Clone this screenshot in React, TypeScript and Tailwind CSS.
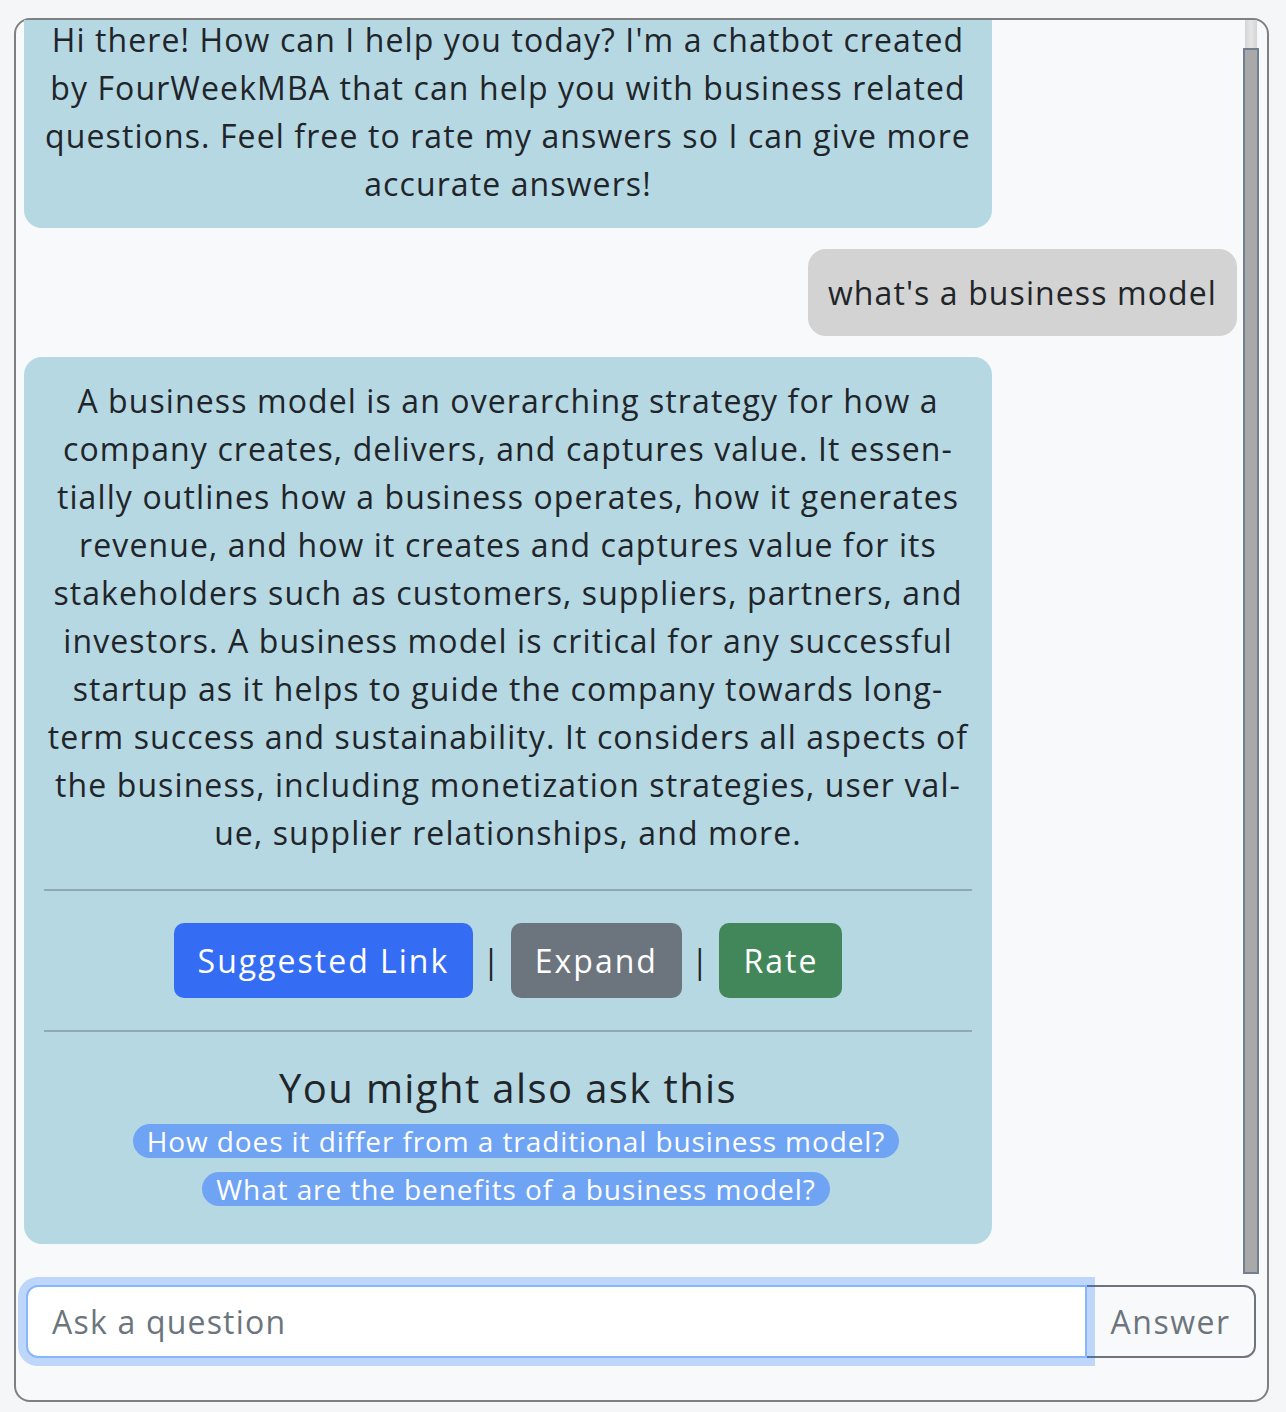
import { useState } from 'react'

const botIntro = [
  "Hi there! How can I help you today? I'm a chatbot created",
  'by FourWeekMBA that can help you with business related',
  'questions. Feel free to rate my answers so I can give more',
  'accurate answers!',
]

const answerLines = [
  'A business model is an overarching strategy for how a',
  'company creates, delivers, and captures value. It essen-',
  'tially outlines how a business operates, how it generates',
  'revenue, and how it creates and captures value for its',
  'stakeholders such as customers, suppliers, partners, and',
  'investors. A business model is critical for any successful',
  'startup as it helps to guide the company towards long-',
  'term success and sustainability. It considers all aspects of',
  'the business, including monetization strategies, user val-',
  'ue, supplier relationships, and more.',
]

const followUps = [
  'How does it differ from a traditional business model?',
  'What are the benefits of a business model?',
]

const Lines = ({ lines }: { lines: string[] }) => (
  <>
    {lines.map((line) => (
      <span key={line} className="block whitespace-nowrap">
        {line}
      </span>
    ))}
  </>
)

export default function App() {
  const [question, setQuestion] = useState('')

  return (
    <div className="min-h-[1412px] w-full bg-[#f5f6f8] pt-[18px] font-['Open_Sans',sans-serif] text-[#212529]">
      <div className="ml-[14px] flex h-[1384px] w-[1255px] flex-col rounded-[16px] border-2 border-[#808080] bg-[#f8f9fa]">
        {/* Chat log + fake scrollbar */}
        <div className="flex h-[1255px] w-full">
          <div className="flex flex-1 flex-col justify-end gap-[21px] overflow-hidden pb-[31px] pl-[8px] pr-[6px] text-[32px] leading-[48px] tracking-[1.1px]">
            <div className="w-[968px] shrink-0 rounded-[18px] bg-[#b5d8e3] px-[20px] py-[20px] text-center">
              <Lines lines={botIntro} />
            </div>

            <div className="shrink-0 self-end rounded-[18px] bg-[#d3d3d3] px-[20px] pb-[19px] pt-[20px]">
              what's a business model
            </div>

            <div className="w-[968px] shrink-0 rounded-[18px] bg-[#b5d8e3] px-[20px] pb-[38px] pt-[20px] text-center">
              <Lines lines={answerLines} />

              <hr className="my-[32px] border-t-2 border-[#8fa8b2]" />

              <div className="flex items-center justify-center tracking-[2px]">
                <button className="flex h-[75px] items-center rounded-[10px] bg-[#346df4] px-[24px] text-white">
                  Suggested Link
                </button>
                <span className="mx-[9px]">|</span>
                <button className="flex h-[75px] items-center rounded-[10px] bg-[#6c757d] px-[24px] text-white">
                  Expand
                </button>
                <span className="mx-[9px]">|</span>
                <button className="flex h-[75px] items-center rounded-[10px] bg-[#41875a] px-[24px] text-white">
                  Rate
                </button>
              </div>

              <hr className="my-[32px] border-t-2 border-[#8fa8b2]" />

              <h5 className="text-[40px] font-normal leading-[48px] tracking-[1.4px]">You might also ask this</h5>
              <div className="mt-[12px] flex flex-col items-center gap-[14px] pl-[16px]">
                {followUps.map((q) => (
                  <a
                    key={q}
                    href="#"
                    className="flex h-[34px] items-center rounded-full bg-[#6fa3f4] px-[14px] text-[28px] leading-[34px] tracking-[0.9px] text-white"
                  >
                    {q}
                  </a>
                ))}
              </div>
            </div>
          </div>

          <div className="mb-[1px] mr-[8px] flex w-[16px] flex-col items-center">
            <div className="h-[28px] w-[12px] bg-gradient-to-r from-[#d4d4d4] via-[#e6e6e6] to-[#d4d4d4]" />
            <div className="w-[16px] flex-1 border-2 border-[#708090] bg-[#a9a9a9]" />
          </div>
        </div>

        {/* Question input */}
        <div className="ml-[10px] mr-[11px] mt-[10px] flex h-[73px] text-[32px] tracking-[1.2px]">
          <input
            type="text"
            value={question}
            onChange={(e) => setQuestion(e.target.value)}
            placeholder="Ask a question"
            className="relative z-10 h-full flex-1 rounded-l-[12px] border-2 border-[#86b7fe] bg-white px-[24px] text-[#212529] shadow-[0_0_0_8px_rgba(13,110,253,0.25)] outline-none placeholder:text-[#6c757d]"
          />
          <button className="-ml-[2px] h-full w-[171px] rounded-r-[12px] border-2 border-[#6c757d] text-[#6c757d] tracking-[1.5px]">
            Answer
          </button>
        </div>
      </div>
    </div>
  )
}
